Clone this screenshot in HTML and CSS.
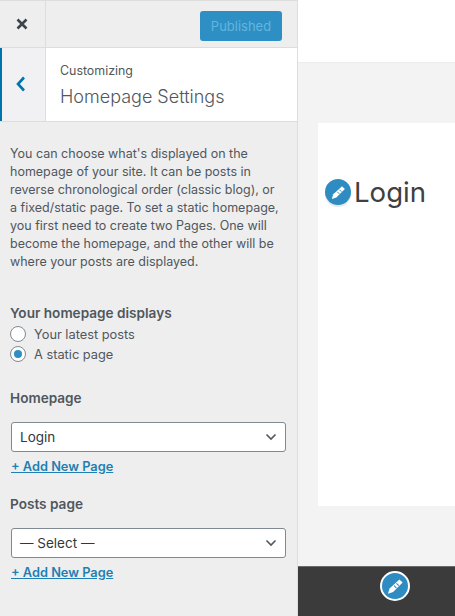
FILE: index.html
```html
<!DOCTYPE html>
<html lang="en">
  <head>
    <meta charset="UTF-8" />
    <title>Homepage Settings</title>
    <link rel="stylesheet" href="styles.css">
  </head>
  <body>
    <div class="sidebar">
      <div class="topbar">
        <div class="close">
          <svg width="12" height="12" viewBox="0 0 12 12"><path d="M1.5 1.5l9 9M10.5 1.5l-9 9" stroke="#3c434a" stroke-width="2.6" fill="none"/></svg>
        </div>
        <div class="publish">
          <button class="published" type="button">Published</button>
        </div>
      </div>
      <div class="section-head">
        <div class="back">
          <svg width="10" height="16" viewBox="0 0 10 16"><path d="M8 1.5L2 8l6 6.5" stroke="#0073aa" stroke-width="2.6" fill="none"/></svg>
        </div>
        <div class="section-title">
          <span class="crumb">Customizing</span>
          <h1>Homepage Settings</h1>
        </div>
      </div>
      <div class="controls">
        <p class="description">You can choose what's displayed on the homepage of your site. It can be posts in reverse chronological order (classic blog), or a fixed/static page. To set a static homepage, you first need to create two Pages. One will become the homepage, and the other will be where your posts are displayed.</p>

        <h2 class="radio-title">Your homepage displays</h2>
        <div class="radio-row"><span class="radio"></span>Your latest posts</div>
        <div class="radio-row"><span class="radio checked"></span>A static page</div>

        <h2 class="select-title first">Homepage</h2>
        <div class="select">Login<svg width="12" height="8" viewBox="0 0 12 8"><path d="M1.5 1.5L6 6l4.500-4.500" stroke="#50575e" stroke-width="1.6" fill="none"/></svg></div>
        <a class="add-page" href="#">+ Add New Page</a>

        <h2 class="select-title second">Posts page</h2>
        <div class="select">— Select —<svg width="12" height="8" viewBox="0 0 12 8"><path d="M1.5 1.5L6 6l4.500-4.500" stroke="#50575e" stroke-width="1.6" fill="none"/></svg></div>
        <a class="add-page" href="#">+ Add New Page</a>
      </div>
    </div>

    <div class="preview">
      <div class="site-header"></div>
      <div class="site-main">
        <div class="site-page">
          <div class="page-title">
            <span class="edit-icon">
              <svg width="17" height="17" viewBox="0 0 16 16"><path d="M11.300 2l2.700 2.700-8 8-4.300 1.300 1.300-4.300z" fill="#fff"/><path d="M8.800 5.300l2 2M6.800 7.300l2 2" stroke="#2e8cc2" stroke-width=".9"/></svg>
            </span>
            <span>Login</span>
          </div>
        </div>
      </div>
      <div class="site-footer">
        <span class="edit-icon footer-icon">
          <svg width="19" height="19" viewBox="0 0 16 16"><path d="M11.300 2l2.700 2.700-8 8-4.300 1.300 1.300-4.300z" fill="#fff"/><path d="M8.800 5.300l2 2M6.800 7.300l2 2" stroke="#2e8cc2" stroke-width=".9"/></svg>
        </span>
      </div>
    </div>
  </body>
</html>
```

FILE: styles.css
```css
* {
  box-sizing: border-box;
}
html,
body {
  height: 100%;
}
body {
  margin: 0;
  display: flex;
  height: 616px;
  overflow: hidden;
  font-family: Inter, Roboto, sans-serif;
  background-color: #f3f3f3;
}
.sidebar {
  width: 298px;
  flex: none;
  background-color: #eeeeee;
  border-right: 1px solid #dddddd;
}
.topbar {
  display: flex;
  height: 48px;
  border-top: 1px solid #dddddd;
  border-bottom: 1px solid #dddddd;
}
.close {
  width: 46px;
  display: flex;
  align-items: center;
  justify-content: center;
  padding-right: 2px;
  border-right: 1px solid #dddddd;
}
.publish {
  flex: 1;
  display: flex;
  justify-content: flex-end;
  padding: 10px 15px 0 0;
}
.published {
  width: 82px;
  height: 30px;
  padding: 0;
  border: 0;
  border-radius: 3px;
  background-color: #2e8fc5;
  color: #62b6df;
  font-family: inherit;
  font-size: 13px;
}
.section-head {
  display: flex;
  height: 74px;
  background-color: white;
  border-bottom: 1px solid #dddddd;
}
.back {
  width: 46px;
  display: flex;
  align-items: center;
  justify-content: center;
  padding: 0 5px 2px 0;
  background-color: #f1f1f3;
  border-left: 2px solid #0073aa;
  border-right: 1px solid #dddddd;
}
.section-title {
  padding: 15px 0 0 14px;
  color: #50575e;
}
.crumb {
  display: block;
  font-size: 12.4px;
  line-height: 16px;
}
h1 {
  margin: 6px 0 0;
  font-size: 18px;
  font-weight: 300;
  line-height: 24px;
}
.controls {
  padding: 23px 10px 0;
  color: #50575e;
}
.description {
  width: 272px;
  margin: 0 0 33px;
  font-size: 12.5px;
  line-height: 18px;
}
h2 {
  margin: 0;
  font-size: 13.6px;
  font-weight: 600;
  line-height: 18px;
}
.radio-title {
  margin-bottom: 2px;
}
.radio-row {
  display: flex;
  align-items: center;
  gap: 8px;
  height: 20px;
  font-size: 12.8px;
}
.radio {
  width: 16px;
  height: 16px;
  display: flex;
  align-items: center;
  justify-content: center;
  background-color: white;
  border: 1px solid #7e8993;
  border-radius: 50%;
}
.checked::after {
  content: "";
  width: 8px;
  height: 8px;
  border-radius: 50%;
  background-color: #2e8fc5;
}
.select-title.first {
  margin: 25px 0 15px;
}
.select-title.second {
  margin: 19px 0 15px;
}
.select {
  display: flex;
  align-items: center;
  justify-content: space-between;
  width: 275px;
  height: 30px;
  margin-left: 1px;
  padding: 0 8px;
  background-color: white;
  border: 1px solid #7e8993;
  border-radius: 3px;
  color: #32373c;
  font-size: 13.5px;
}
.add-page {
  display: block;
  margin: 6px 0 0 1px;
  color: #1f7fb3;
  font-size: 12.8px;
  font-weight: 600;
  line-height: 18px;
}
.preview {
  flex: 1;
  display: flex;
  flex-direction: column;
  min-width: 0;
}
.site-header {
  height: 63px;
  flex: none;
  background-color: white;
  border-bottom: 1px solid #ececec;
}
.site-main {
  flex: 1;
  padding: 60px 0 60px 20px;
}
.site-page {
  height: 100%;
  padding-top: 52px;
  background-color: white;
}
.page-title {
  display: flex;
  align-items: center;
  gap: 3px;
  margin-left: 7px;
  color: #404040;
  font-size: 27.6px;
  line-height: 34px;
}
.edit-icon {
  width: 26px;
  height: 26px;
  flex: none;
  display: flex;
  align-items: center;
  justify-content: center;
  background-color: #2e8cc2;
  border-radius: 50%;
  box-shadow: 0 2px 1px rgba(0, 0, 0, 0.1);
}
.site-footer {
  height: 50px;
  flex: none;
  padding: 4px 0 0 82px;
  background-color: #3b3b3b;
  border-top: 1px solid #6a6a6a;
}
.footer-icon {
  width: 30px;
  height: 30px;
  border: 2px solid white;
  box-shadow: none;
}
```
